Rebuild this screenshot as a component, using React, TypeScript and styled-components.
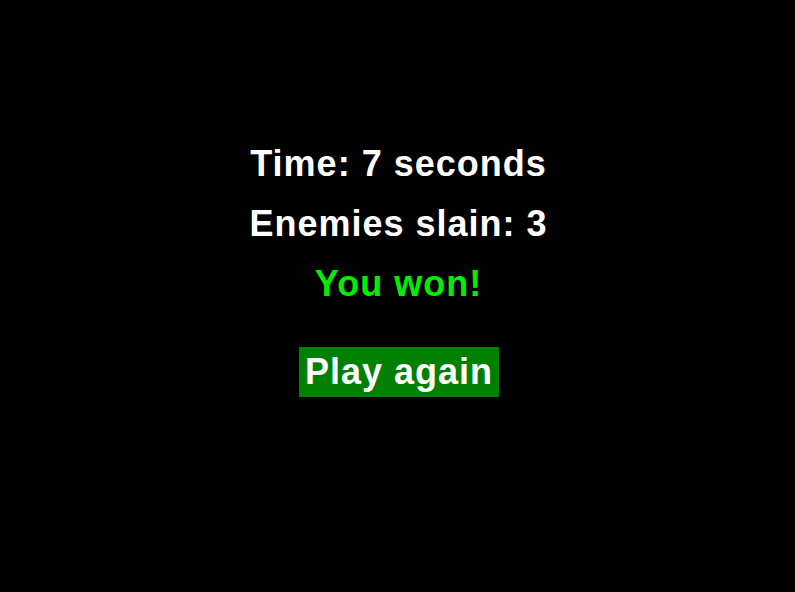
import styled, { createGlobalStyle } from "styled-components";

const GlobalStyle = createGlobalStyle`
  html, body {
    margin: 0;
    padding: 0;
    background: #000;
  }
`;

const Screen = styled.div`
  width: 795px;
  height: 592px;
  background: #000;
  display: flex;
  flex-direction: column;
  align-items: center;
  padding-top: 134px;
  padding-left: 2px;
  box-sizing: border-box;
  font-family: "Liberation Sans", Arial, sans-serif;
  font-weight: bold;
  letter-spacing: 1px;
`;

const Line = styled.div<{ $color?: string }>`
  font-size: 36px;
  line-height: 60px;
  color: ${({ $color }) => $color ?? "#fff"};
`;

const PlayButton = styled.button`
  margin-top: 33px;
  width: 200px;
  height: 50px;
  border: none;
  padding: 0 0 0 1px;
  background: #008000;
  color: #fff;
  font-family: inherit;
  font-weight: bold;
  font-size: 36px;
  letter-spacing: 1px;
  cursor: pointer;
`;

export default function App() {
  return (
    <>
      <GlobalStyle />
      <Screen>
        <Line>Time: 7 seconds</Line>
        <Line>Enemies slain: 3</Line>
        <Line $color="#00ee00">You won!</Line>
        <PlayButton>Play again</PlayButton>
      </Screen>
    </>
  );
}
